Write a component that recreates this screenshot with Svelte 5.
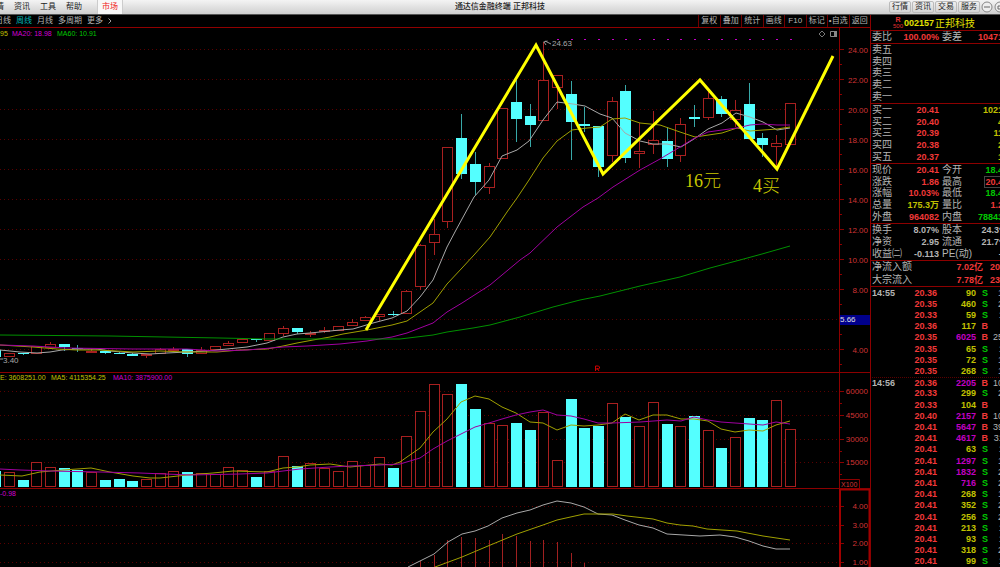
<script lang="ts">
	/**
	 * Weekly stock chart terminal: candles, volume, MACD and the quote panel
	 */

	// [high, body top, body bottom, low, rising]
	type Candle = [number, number, number, number, number];

	const menu = ['行情', '资讯', '工具', '帮助'];
	const links = ['行情', '资讯', '交易', '服务'];
	const periods = ['日线', '周线', '月线', '多周期', '更多'];
	const tools = ['复权', '叠加', '统计', '画线', 'F10', '标记', '•自选', '返回'];
	let period = $state('周线');

	const STEP = 13.7;
	const xAt = (i: number) => Math.round(i * STEP - 4.7);

	const candles: Candle[] = [
		[350, 350, 357, 357, 0], [353, 353, 357, 357, 1], [353, 353, 354, 355, 0],
		[346, 346, 354, 354, 1], [342, 344, 348, 349, 1], [344, 344, 347, 351, 0],
		[345, 348, 349, 352, 0], [349, 351, 352, 353, 1], [351, 351, 353, 354, 0],
		[352, 353, 354, 354, 0], [353, 354, 356, 356, 0], [354, 354, 356, 358, 1],
		[348, 349, 354, 354, 1], [347, 349, 351, 351, 1], [349, 349, 354, 357, 0],
		[347, 350, 354, 354, 1], [346, 346, 350, 350, 1], [341, 343, 346, 346, 1],
		[338, 339, 343, 343, 1], [339, 339, 340, 342, 0], [333, 333, 341, 341, 1],
		[326, 328, 334, 336, 1], [328, 328, 332, 334, 0], [331, 333, 334, 337, 1],
		[327, 330, 332, 333, 1], [326, 326, 331, 331, 1], [319, 322, 326, 326, 1],
		[316, 317, 321, 321, 1], [314, 314, 317, 321, 1], [311, 314, 315, 316, 0],
		[290, 291, 314, 314, 1], [244, 245, 287, 290, 1], [219, 234, 243, 255, 1],
		[147, 147, 222, 228, 1], [114, 138, 174, 179, 0], [152, 164, 182, 195, 0],
		[163, 166, 188, 194, 1], [108, 108, 159, 159, 1], [80, 102, 119, 142, 0],
		[104, 116, 125, 147, 0], [42, 80, 121, 121, 1], [75, 75, 88, 109, 1],
		[81, 94, 122, 160, 0], [107, 124, 126, 132, 0], [126, 126, 167, 177, 0],
		[97, 101, 156, 162, 1], [85, 91, 158, 163, 0], [123, 151, 154, 168, 1],
		[111, 140, 145, 154, 1], [127, 141, 159, 167, 0], [118, 124, 156, 162, 1],
		[105, 117, 119, 127, 0], [91, 98, 118, 120, 1], [96, 99, 114, 117, 0],
		[100, 110, 120, 127, 1], [83, 104, 139, 139, 0], [133, 138, 145, 157, 0],
		[135, 143, 147, 167, 1], [103, 103, 145, 145, 1]
	];

	const volumes = [
		471, 472, 480, 462, 467, 468, 470, 472, 480, 479, 481, 479, 473, 471, 472, 473, 474, 467,
		470, 477, 471, 456, 466, 463, 468, 471, 461, 465, 457, 468, 436, 411, 384, 394, 384, 409,
		423, 425, 423, 430, 412, 460, 399, 428, 426, 403, 417, 426, 402, 424, 426, 416, 430, 448,
		437, 418, 420, 400, 429
	];

	const macdBars = [561, 555, 540, 537, 538, 540, 534, 536, 541, 540, 542, 553, 563];

	const priceLines = [
		{
			color: '#a8a8a8',
			points:
				'0,350 10,351 20,352 37,353 50,352 62,350 77,349 97,349 110,351 133,353 150,354 167,353 187,352 207,351 227,349 247,347 267,343 283,337 297,334 310,333 340,330 353,329 373,323 392,318 407,311 420,297 433,280 447,247 456,230 474,197 489,180 502,156 517,150 529,141 543,120 557,102 573,104 585,106 600,114 612,118 625,133 640,141 653,144 667,144 681,147 694,139 708,129 722,123 736,113 750,117 763,122 777,130 790,128'
		},
		{
			color: '#a0a000',
			points:
				'0,345 33,347 57,349 77,350 100,350 133,352 160,351 187,352 217,352 240,350 267,349 283,346 297,343 313,340 330,337 343,334 367,330 392,325 407,321 433,303 447,284 462,268 474,255 490,237 507,212 517,198 529,180 543,158 557,141 572,130 587,128 600,127 612,119 625,118 640,123 660,125 680,132 695,137 722,133 737,128 750,131 777,129 790,127'
		},
		{
			color: '#a000a0',
			points:
				'0,345 33,346 67,348 133,349 187,349 217,351 247,350 283,347 307,346 340,344 367,341 392,337 407,333 433,323 447,312 462,303 490,285 520,260 530,253 557,227 583,207 598,198 613,187 640,170 660,159 680,147 693,139 708,132 722,130 737,128 750,125 763,124 777,125 790,125'
		},
		{
			color: '#009000',
			points:
				'0,335 110,336 220,338 267,339 320,339 400,339 433,335 447,332 473,328 490,325 520,317 553,307 580,300 600,296 640,286 680,277 710,268 740,260 762,254 776,250 790,246'
		}
	];

	const volumeLines = [
		{
			color: '#a0a000',
			points:
				'0,475 22,476 40,472 63,470 77,469 91,468 110,472 133,476 150,478 160,478 187,475 213,473 233,471 267,472 283,468 297,467 310,465 330,464 350,467 380,464 392,465 400,462 407,457 420,448 433,432 447,419 461,402 475,396 489,399 502,407 516,413 530,422 543,423 557,430 571,425 584,426 598,425 612,423 625,414 639,420 653,415 667,415 681,419 694,419 708,421 721,429 735,432 749,430 763,431 776,425 790,421'
		},
		{
			color: '#a000a0',
			points:
				'0,469 20,470 50,471 100,472 140,473 190,475 240,474 267,473 283,471 300,469 330,467 350,466 380,465 400,464 420,458 433,449 447,441 461,434 475,427 489,423 502,419 516,415 530,412 543,410 557,415 571,416 584,419 598,423 612,423 640,422 667,420 681,421 694,417 708,420 721,422 749,424 763,425 776,422 790,424'
		}
	];

	const macdLines = [
		{
			color: '#a8a8a8',
			points:
				'408,567 420,561 434,554 448,542 462,534 475,531 488,526 502,518 517,513 530,510 543,505 557,501 571,503 584,507 598,514 612,515 625,520 639,525 653,528 667,534 700,536 720,535 735,537 749,541 763,546 776,549 790,549'
		},
		{
			color: '#a0a000',
			points:
				'435,567 462,557 488,546 517,534 543,525 557,520 584,514 613,514 627,516 653,519 667,523 680,525 693,526 707,529 737,531 763,536 790,540'
		}
	];

	const prices = [24, 22, 20, 18, 16, 14, 12, 10, 8, 6, 4];
	const priceY = (p: number) => 410 - p * 15;
	const volumeAxis = [
		[60000, 391], [45000, 415], [30000, 439], [15000, 462]
	];
	const macdAxis = [
		['4.00', 506], ['3.00', 525], ['2.00', 543], ['1.00', 562]
	];

	const sells = ['卖五', '卖四', '卖三', '卖二', '卖一'];
	const buys = [
		['买一', '20.41', '10213'],
		['买二', '20.40', '41'],
		['买三', '20.39', '112'],
		['买四', '20.38', '21'],
		['买五', '20.37', '15']
	];
	const quotes = [
		['现价', '20.41', 'red', '今开', '18.45', 'green'],
		['涨跌', '1.86', 'red', '最高', '20.41', 'red boxed'],
		['涨幅', '10.03%', 'red', '最低', '18.45', 'green'],
		['总量', '175.3万', 'yellow', '量比', '1.22', 'red'],
		['外盘', '964082', 'red', '内盘', '788430', 'green']
	];
	const facts = [
		['换手', '8.07%', '股本', '24.3亿'],
		['净资', '2.95', '流通', '21.7亿'],
		['收益㈡', '-0.113', 'PE(动)', '—']
	];
	const flows = [
		['净流入额', '7.02亿', '20%'],
		['大宗流入', '7.78亿', '23%']
	];
	const ticks = [
		['14:55', '20.36', '90', 'S', '12'],
		['', '20.35', '460', 'S', '24'],
		['', '20.33', '59', 'S', '11'],
		['', '20.36', '117', 'B', ''],
		['', '20.35', '6025', 'B', '252'],
		['', '20.35', '65', 'S', '11'],
		['', '20.35', '72', 'S', '12'],
		['', '20.35', '268', 'S', '16'],
		['14:56', '20.36', '2205', 'B', '101'],
		['', '20.33', '299', 'S', '24'],
		['', '20.33', '104', 'B', ''],
		['', '20.40', '2157', 'B', '101'],
		['', '20.41', '5647', 'B', '392'],
		['', '20.41', '4617', 'B', '311'],
		['', '20.41', '63', 'S', '11'],
		['', '20.41', '1297', 'S', '17'],
		['', '20.41', '1832', 'S', '24'],
		['', '20.41', '716', 'S', '25'],
		['', '20.41', '268', 'S', '12'],
		['', '20.41', '352', 'S', '21'],
		['', '20.41', '256', 'S', '21'],
		['', '20.41', '213', 'S', '11'],
		['', '20.41', '93', 'S', '11'],
		['', '20.41', '318', 'S', '21'],
		['', '20.41', '99', 'S', '11']
	];
</script>

<div class="terminal">
	<header class="titlebar">
		<nav class="menu">
			{#each menu as item}
				<button type="button">{item}</button>
			{/each}
			<button type="button" class="market">市场</button>
		</nav>
		<h1>通达信金融终端 正邦科技</h1>
		<div class="links">
			{#each links as item}
				<button type="button">{item}</button>
			{/each}
			<button type="button" class="round" aria-label="Minimize">
				<svg viewBox="0 0 12 12" width="12" height="12">
					<circle cx="6" cy="6" r="5" fill="#eee" stroke="#888" />
					<path d="M3 6h6" stroke="#666" />
				</svg>
			</button>
			<button type="button" class="round" aria-label="Restore">
				<svg viewBox="0 0 12 12" width="12" height="12">
					<circle cx="6" cy="6" r="5" fill="#eee" stroke="#888" />
					<path d="M4 5h4v3H4z" fill="none" stroke="#666" />
				</svg>
			</button>
		</div>
	</header>

	<div class="workspace">
		<main class="charts">
			<div class="toolbar">
				<div class="periods">
					{#each periods as p}
						<button type="button" class:active={period === p} onclick={() => (period = p)}>{p}</button>
					{/each}
					<svg class="more" viewBox="0 0 4 8" width="4" height="8" aria-hidden="true">
						<path d="M0.5 1.5L3 4L0.5 6.5" fill="none" stroke="#999" />
					</svg>
				</div>
				<div class="tools">
					{#each tools as tool}
						<button type="button">{tool}</button>
					{/each}
				</div>
			</div>

			<!-- Price -->
			<svg class="pane" viewBox="0 28 870 345">
				{#each prices as p}
					<path class="grid" d="M0 {priceY(p) - 0.5}H839" />
					<path class="axis" d="M839 {priceY(p) - 0.5}h5M839 {priceY(p) + 14.5}h3" />
					{#if p !== 6}
						<text class="scale" x="868" y={priceY(p) + 3}>{p}.00</text>
					{/if}
				{/each}
				<path class="axis" d="M839.5 28V372M0 372.5H870" />

				{#each candles as [high, top, bottom, low, rising], i}
					{@const x = xAt(i)}
					<g class={rising ? 'up' : 'down'}>
						<path d="M{x + 0.5} {high}V{top}M{x + 0.5} {bottom}V{low}" />
						{#if rising}
							<rect x={x - 4.5} y={top + 0.5} width="10" height={Math.max(bottom - top - 1, 1)} />
						{:else}
							<rect x={x - 5} y={top} width="11" height={bottom - top} />
						{/if}
					</g>
				{/each}
				{#each priceLines as line}
					<polyline class="line" points={line.points} stroke={line.color} />
				{/each}
				{#each { length: 18 } as _, i}
					<rect x={xAt(i + 41)} y="39" width="2" height="1" fill="#c800c8" />
				{/each}
				<polyline class="trend" points="366,330 536,45 603,174 700,80 777,169 833,56" />

				<path d="M543.5 42l4-1M544 42l2 3M545 41l6 3" stroke="#999" fill="none" />
				<text class="mark" x="552" y="46">24.63</text>
				<path d="M0 359h3" stroke="#999" />
				<text class="mark" x="3" y="363">3.40</text>
				<text class="note" x="685" y="187">16元</text>
				<text class="note" x="753" y="192">4买</text>
				<path d="M595.5 371v-5h3l1 1v1l-1 1h-3M597 368l2 3" stroke="#d00000" fill="none" />
				<path d="M822 31l3 3l-3 3l-3 -3z" stroke="#777" fill="none" />
				<path d="M830.5 31.5h6v5h-6z" stroke="#888" fill="none" />
				<path d="M834 31h3v6h-3z" fill="#888" />
				<rect x="840" y="315" width="30" height="10" fill="#00008c" />
				<text class="mark cursor" x="840" y="322">5.66</text>
				<text class="legend" x="0" y="36">
					<tspan fill="#c0c000">95</tspan>
					<tspan x="12" fill="#d000d0">MA20: 18.98</tspan>
					<tspan x="57" fill="#00c800">MA60: 10.91</tspan>
				</text>
			</svg>

			<!-- Volume -->
			<svg class="pane" viewBox="0 373 870 116">
				{#each volumeAxis as [value, y]}
					<path class="grid" d="M0 {y + 0.5}H839" />
					<path class="axis" d="M839 {y + 0.5}h5M839 {y + 12.5}h3" />
					<text class="scale" x="868" y={y + 3}>{value}</text>
				{/each}
				{#each volumes as top, i}
					{@const x = xAt(i)}
					{#if candles[i][4]}
						<rect class="vol-up" x={x - 4.5} y={top + 0.5} width="10" height={486 - top} />
					{:else}
						<rect class="vol-down" x={x - 5} y={top} width="11" height={487 - top} />
					{/if}
				{/each}
				{#each volumeLines as line}
					<polyline class="line" points={line.points} stroke={line.color} />
				{/each}
				<path class="axis" d="M839.5 373V488M0 488.5H870M840 479.5H859.5V488" />
				<text class="unit" x="841" y="487">X100</text>
				<text class="legend" x="0" y="380">
					<tspan fill="#c0c000">E: 3608251.00</tspan>
					<tspan x="51" fill="#c0c000">MA5: 4115354.25</tspan>
					<tspan x="113" fill="#d000d0">MA10: 3875900.00</tspan>
				</text>
			</svg>

			<!-- MACD -->
			<svg class="pane" viewBox="0 489 870 78">
				{#each macdAxis as [label, y]}
					<path class="grid" d="M0 {+y + 0.5}H839" />
					<path class="axis" d="M840 {+y + 0.5}h4" />
					<text class="scale" x="868" y={+y + 3}>{label}</text>
				{/each}
				{#each macdBars as top, i}
					<path class="macd-bar" d="M{xAt(i + 31) + 0.5} {top}V567" />
				{/each}
				{#each macdLines as line}
					<polyline class="line" points={line.points} stroke={line.color} />
				{/each}
				<path class="frame" d="M840 567V489.5H869.5V567" />
				<text class="legend" x="0" y="496" fill="#d000d0">-0.98</text>
			</svg>
		</main>

		<aside class="panel">
			<h2>
				<span class="badge"><b>R</b><small>500</small></span>
				<span class="code">002157</span>
				<span class="name">正邦科技</span>
			</h2>
			<table class="quote single">
				<tbody>
					<tr>
						<th>委比</th>
						<td class="red">100.00%</td>
						<th>委差</th>
						<td class="red">104712</td>
					</tr>
				</tbody>
			</table>
			<table class="quote five">
				<tbody>
					{#each sells as label}
						<tr><th>{label}</th></tr>
					{/each}
				</tbody>
			</table>
			<table class="quote five">
				<tbody>
					{#each buys as [label, price, lots]}
						<tr>
							<th>{label}</th>
							<td class="red">{price}</td>
							<td></td>
							<td class="yellow">{lots}</td>
						</tr>
					{/each}
				</tbody>
			</table>
			<table class="quote five">
				<tbody>
					{#each quotes as [label, value, tone, label2, value2, tone2]}
						<tr>
							<th>{label}</th>
							<td class={tone}>{value}</td>
							<th>{label2}</th>
							<td class={tone2}><span>{value2}</span></td>
						</tr>
					{/each}
				</tbody>
			</table>
			<table class="quote three">
				<tbody>
					{#each facts as [label, value, label2, value2]}
						<tr>
							<th>{label}</th>
							<td>{value}</td>
							<th>{label2}</th>
							<td>{value2}</td>
						</tr>
					{/each}
				</tbody>
			</table>
			<table class="quote flow">
				<tbody>
					{#each flows as [label, value, share]}
						<tr>
							<th>{label}</th>
							<td class="red">{value}</td>
							<td class="red">{share}</td>
						</tr>
					{/each}
				</tbody>
			</table>
			<table class="quote tape">
				<tbody>
					{#each ticks as [time, price, lots, side, count], i}
						<tr class:minute={time && i > 0}>
							<td class="time">{time}</td>
							<td class="red">{price}</td>
							<td class={+lots > 500 ? 'magenta' : 'yellow'}>{lots}</td>
							<td class="side {side === 'B' ? 'red' : 'green'}">{side}</td>
							<td class="count">{count}</td>
						</tr>
					{/each}
				</tbody>
			</table>
		</aside>
	</div>
</div>

<style>
	:global(body) {
		margin: 0;
		background: #000;
	}

	.terminal {
		display: flex;
		flex-direction: column;
		height: 100vh;
		overflow: hidden;
		background: #000;
		color: #b4b4b4;
		font-family: 'Liberation Sans', 'Noto Sans CJK SC', sans-serif;
		font-size: 8px;
	}

	button {
		margin: 0;
		padding: 0;
		border: 0;
		background: none;
		color: inherit;
		font: inherit;
		white-space: nowrap;
		cursor: pointer;
	}

	.titlebar {
		flex: none;
		display: grid;
		grid-template-columns: 1fr auto 1fr;
		align-items: stretch;
		height: 14px;
		border-bottom: 1px solid #555;
		background: linear-gradient(#f4f4f4, #cfcfcf);
		color: #222;
		line-height: 14px;
	}

	.titlebar h1 {
		margin: 0;
		font-size: 8px;
		font-weight: 500;
	}

	.menu {
		display: flex;
		gap: 10px;
		margin-left: -12px;
	}

	.menu .market {
		margin-left: 5px;
		padding: 0 4px;
		background: #f8f8f8;
		border-left: 1px solid #ccc;
		border-right: 1px solid #ccc;
		color: #f02020;
	}

	.links {
		display: flex;
		justify-content: flex-end;
		align-items: center;
		gap: 1px;
		margin-right: -6px;
	}

	.links button {
		height: 12px;
		padding: 0 2px;
		border: 1px solid #bbb;
		border-radius: 2px;
		line-height: 10px;
	}

	.links .round {
		padding: 0;
		border: 0;
	}

	.round svg {
		display: block;
	}

	.workspace {
		flex: 1;
		display: grid;
		grid-template-columns: minmax(0, 1fr) 130px;
		min-height: 0;
	}

	.charts {
		display: flex;
		flex-direction: column;
		min-width: 0;
	}

	.toolbar {
		flex: none;
		display: flex;
		justify-content: space-between;
		height: 12px;
		border-bottom: 1px solid #900000;
		line-height: 12px;
	}

	.periods {
		display: flex;
		align-items: center;
		gap: 5px;
		margin-left: -5px;
	}

	.periods .active {
		color: #00b4b4;
	}

	.tools {
		display: grid;
		grid-template-columns: repeat(8, 1fr);
		width: 172px;
	}

	.tools button {
		border-left: 1px solid #700000;
		line-height: 12px;
	}

	.pane {
		flex: none;
		display: block;
		width: 100%;
		height: auto;
	}

	.grid {
		stroke: #5a0000;
		stroke-dasharray: 1 3;
	}

	.axis {
		fill: none;
		stroke: #8c0000;
	}

	.frame {
		fill: none;
		stroke: #a00000;
		stroke-width: 2;
	}

	.up path,
	.up rect,
	.vol-up {
		fill: #000;
		stroke: #a82020;
	}

	.down path {
		stroke: #38a8a8;
	}

	.down rect,
	.vol-down {
		fill: #54ffff;
	}

	.macd-bar {
		stroke: #a02020;
	}

	.line {
		fill: none;
		stroke-width: 1;
	}

	.trend {
		fill: none;
		stroke: #ffff00;
		stroke-width: 3;
	}

	.scale {
		fill: #d03434;
		font-size: 8px;
		text-anchor: end;
	}

	.unit {
		fill: #d03434;
		font-size: 7px;
	}

	.mark {
		fill: #a8a8a8;
		font-size: 8px;
	}

	.cursor {
		fill: #e0e0e0;
	}

	.legend {
		font-size: 7px;
	}

	.note {
		fill: #c8c800;
		font-family: 'Liberation Serif', 'Noto Sans CJK SC', serif;
		font-size: 18px;
		font-weight: 300;
	}

	.panel {
		display: flex;
		flex-direction: column;
		min-height: 0;
		overflow: hidden;
		border-left: 1px solid #8c0000;
	}

	.panel h2 {
		flex: none;
		display: flex;
		align-items: center;
		gap: 1px;
		height: 15px;
		margin: 0;
		padding-left: 22px;
		color: #e0e000;
		font-size: 10px;
		font-weight: 400;
		white-space: nowrap;
	}

	.badge {
		display: flex;
		flex-direction: column;
		align-items: center;
		color: #e03030;
		font-size: 7px;
		line-height: 6px;
	}

	.badge small {
		font-size: 6px;
	}

	.code {
		font-size: 9px;
		font-weight: 700;
	}

	.quote {
		flex: none;
		display: flex;
		box-sizing: border-box;
		width: 138px;
		padding-left: 1px;
		border-top: 1px solid #8c0000;
		font-size: 9px;
		font-weight: 700;
		white-space: nowrap;
	}

	.quote tbody {
		flex: 1;
		display: grid;
		grid-auto-rows: 1fr;
	}

	.quote tr {
		display: grid;
		grid-template-columns: 30px 37px 31px 38px;
		align-items: center;
		min-height: 0;
		line-height: 10px;
	}

	.quote th {
		padding: 0;
		font-size: 10px;
		font-weight: 400;
		text-align: left;
	}

	.quote td {
		padding: 0;
		text-align: right;
	}

	.quote th:nth-child(3) {
		padding-left: 3px;
	}

	.single {
		height: 13px;
	}

	.five {
		height: 60px;
	}

	.three {
		height: 37px;
	}

	.flow {
		height: 26px;
	}

	.flow tr {
		grid-template-columns: 50px 61px 25px;
	}

	.tape {
		flex: 1;
		min-height: 0;
	}

	.tape tr {
		grid-template-columns: 26px 39px 39px 12px 20px;
	}

	.quote .time {
		text-align: left;
	}

	.quote .count {
		font-weight: 400;
	}

	.minute {
		border-top: 1px dotted #5a0000;
	}

	.boxed span {
		outline: 1px solid #444;
	}

	.red {
		color: #f03838;
	}

	.green {
		color: #00c800;
	}

	.yellow {
		color: #c0c000;
	}

	.magenta {
		color: #c000c0;
	}
</style>
